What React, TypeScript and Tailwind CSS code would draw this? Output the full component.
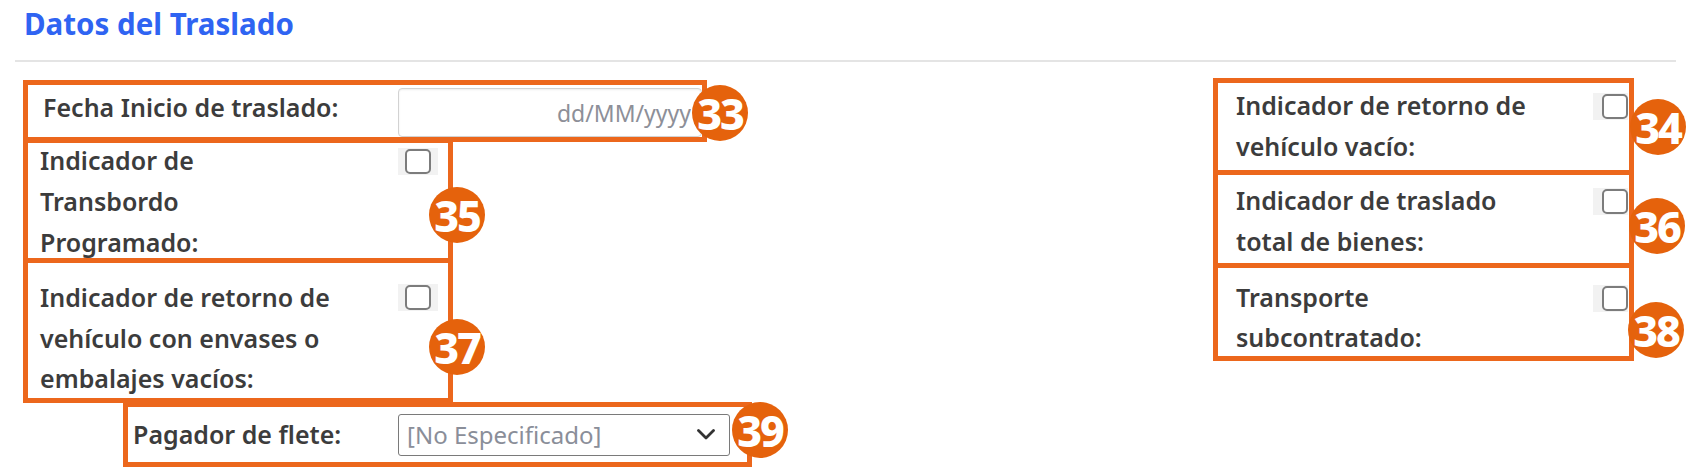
const font = { fontFamily: '"Noto Sans", "Open Sans", sans-serif' };

const Badge = ({ n, className }: { n: string; className: string }) => (
  <div
    className={`absolute flex h-[56px] w-[56px] items-center justify-center rounded-full bg-[#e5620c] text-[43px] font-extrabold leading-none tracking-[-2px] text-white ${className}`}
  >
    {n}
  </div>
);

const Check = ({ className = "" }: { className?: string }) => (
  <div className={`flex h-[27px] shrink-0 items-center bg-[#f2f2f2] ${className}`}>
    <div className="h-[25px] w-[26px] rounded-[5px] border-2 border-[#7c7c7c] bg-white" />
  </div>
);

const App = () => {
  return (
    <div
      className="h-[474px] w-[1693px] overflow-hidden bg-white text-[#3c3c3c]"
      style={font}
    >
      {/* header */}
      <div className="pl-[24px] pt-[5px] text-[29.5px] font-bold leading-[37px] text-[#2f64f2]">
        Datos del Traslado
      </div>
      <div className="ml-[15px] mr-[17px] mt-[18px] h-[2px] bg-[#e4e4e4]" />

      <div className="mt-[16px] flex justify-between pr-[59px] text-[25px] font-semibold leading-[41px]">
        {/* left column */}
        <div className="flex flex-col items-start pl-[23px] pt-[2px]">
          <div className="relative flex h-[62px] w-[684px] border-[5px] border-[#ec671c]">
            <div className="mt-[2px] w-[370px] shrink-0 pl-[15px]">Fecha Inicio de traslado:</div>
            <input
              readOnly
              placeholder="dd/MM/yyyy"
              className="mt-[3px] h-[49px] min-w-0 flex-1 rounded-[4px] border border-[#d2d2d2] bg-white pr-[10px] text-right text-[23px] font-normal shadow-[inset_0_1px_2px_rgba(0,0,0,0.08)] outline-none placeholder:text-[#8d8f98]"
            />
            <Badge n="33" className="left-[664px] top-0" />
          </div>

          <div className="relative -mt-[4px] flex h-[125px] w-[430px] border-[5px] border-[#ec671c]">
            <div className="-mt-[3px] w-[370px] shrink-0 pl-[12px]">
              Indicador de
              <br />
              Transbordo
              <br />
              Programado:
            </div>
            <Check className="mt-[5px] w-[40px] justify-center" />
            <Badge n="35" className="left-[401px] top-[44px]" />
          </div>

          <div className="relative -mt-[5px] flex h-[145px] w-[430px] border-[5px] border-[#ec671c]">
            <div className="w-[370px] shrink-0 pl-[12px] pt-[14px] leading-[40.5px]">
              Indicador de retorno de
              <br />
              vehículo con envases o
              <br />
              embalajes vacíos:
            </div>
            <Check className="mt-[21px] w-[40px] justify-center" />
            <Badge n="37" className="left-[401px] top-[56px]" />
          </div>

          <div className="relative -mt-[1px] ml-[100px] flex h-[65px] w-[629px] items-center border-[5px] border-[#ec671c]">
            <div className="w-[270px] shrink-0 pl-[5px]">Pagador de flete:</div>
            <div className="flex h-[42px] w-[332px] items-center justify-between rounded-[3px] border border-[#7a7a7a] pl-[8px] pr-[14px] text-[24px] font-normal text-[#8a8e99]">
              <span>[No Especificado]</span>
              <svg width="18" height="11" viewBox="0 0 18 11" fill="none">
                <path d="M1.5 1.5 9 9l7.5-7.5" stroke="#333" strokeWidth="2.8" strokeLinecap="round" strokeLinejoin="round" />
              </svg>
            </div>
            <Badge n="39" className="left-[604px] -top-[5px]" />
          </div>
        </div>

        {/* right column */}
        <div className="flex flex-col">
          <div className="relative flex h-[97px] w-[421px] border-[5px] border-[#ec671c]">
            <div className="flex-1 pl-[18px] pt-[2px]">
              Indicador de retorno de
              <br />
              vehículo vacío:
            </div>
            <Check className="mr-[1px] mt-[10px] w-[35px] justify-end" />
            <Badge n="34" className="left-[412px] top-[16px]" />
          </div>

          <div className="relative -mt-[5px] flex h-[98px] w-[421px] border-[5px] border-[#ec671c]">
            <div className="flex-1 pl-[18px] pt-[5px]">
              Indicador de traslado
              <br />
              total de bienes:
            </div>
            <Check className="mr-[1px] mt-[13px] w-[35px] justify-end" />
            <Badge n="36" className="left-[411px] top-[23px]" />
          </div>

          <div className="relative -mt-[5px] flex h-[98px] w-[421px] border-[5px] border-[#ec671c]">
            <div className="flex-1 pl-[18px] pt-[9px] leading-[40px]">
              Transporte
              <br />
              subcontratado:
            </div>
            <Check className="mr-[1px] mt-[17px] w-[35px] justify-end" />
            <Badge n="38" className="left-[410px] top-[34px]" />
          </div>
        </div>
      </div>
    </div>
  );
};

export default App;
